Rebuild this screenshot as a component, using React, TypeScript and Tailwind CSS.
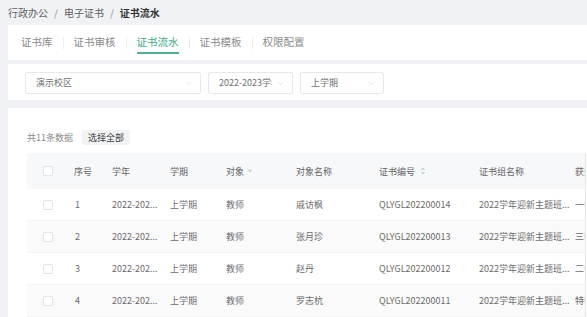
import { ChevronDown } from 'lucide-react';

const TABS = ['证书库', '证书审核', '证书流水', '证书模板', '权限配置'];

const ROWS = [
  { no: '1', name: '戚访枫', code: 'QLYGL202200014', award: '一等奖' },
  { no: '2', name: '张月珍', code: 'QLYGL202200013', award: '三等奖' },
  { no: '3', name: '赵丹', code: 'QLYGL202200012', award: '二等奖' },
  { no: '4', name: '罗志杭', code: 'QLYGL202200011', award: '特等奖' },
];

const COLS = 'grid grid-cols-[37px_39px_58px_55px_70px_83px_100px_96px_120px]';

function Checkbox() {
  return <span className="block h-[10px] w-[10px] rounded-[2px] border border-[#e0e3e8] bg-white" />;
}

function Select({ label, width }: { label: string; width: string }) {
  return (
    <div className={`flex h-[22px] items-center justify-between gap-[4px] overflow-hidden rounded-[2px] border border-[#e6e8ec] bg-white pl-[10px] pr-[7px] ${width}`}>
      <span className="min-w-0 overflow-hidden whitespace-nowrap text-[9px] text-[#707070]">{label}</span>
      <ChevronDown className="h-[9px] w-[9px] shrink-0 text-[#c8cbd0]" strokeWidth={1.5} />
    </div>
  );
}

function SortIcon() {
  return (
    <svg width="6" height="8" viewBox="0 0 6 8" className="ml-[5px]">
      <path d="M3 0.5 L5.5 3 L0.5 3 Z" fill="#cfd2d6" />
      <path d="M3 7.5 L5.5 5 L0.5 5 Z" fill="#cfd2d6" />
    </svg>
  );
}

export default function App() {
  return (
    <div className="h-[317px] w-[587px] overflow-hidden bg-[#f0f2f5] font-['Noto_Sans_CJK_SC',sans-serif] text-[#6b6b6b]">
      <div className="flex h-[25px] items-center gap-[6px] pl-[8px] text-[10px] leading-none text-[#606060]">
        <span>行政办公</span>
        <span className="text-[#909399]">/</span>
        <span>电子证书</span>
        <span className="text-[#909399]">/</span>
        <span className="font-bold text-[#333]">证书流水</span>
      </div>

      <div className="ml-[8px] flex h-[35px] items-center bg-white pl-[13px] text-[10.5px] leading-none text-[#8a8a8a]">
        {TABS.map((t, i) => (
          <div key={t} className="flex items-center">
            {i > 0 && <span className="mx-[10px] h-[12px] w-px bg-[#ececec]" />}
            <span className={`relative ${i === 2 ? 'text-[#3dab8b]' : ''}`}>
              {t}
              {i === 2 && <span className="absolute left-0 right-0 top-[15px] h-[2px] bg-[#4fb096]" />}
            </span>
          </div>
        ))}
      </div>

      <div className="ml-[8px] mt-[4px] flex h-[36px] items-start gap-[7px] bg-white pl-[17px] pt-[8px]">
        <Select label="演示校区" width="w-[176px]" />
        <Select label="2022-2023学年" width="w-[85px]" />
        <Select label="上学期" width="w-[84px]" />
      </div>

      <div className="ml-[8px] mt-[8px] h-[220px] bg-white pl-[19px] pt-[21px]">
        <div className="flex h-[16px] items-center text-[9px] leading-none">
          <span className="text-[#8a8a8a]">共11条数据</span>
          <span className="ml-[9px] flex h-[15px] items-center rounded-[2px] bg-[#f2f3f5] px-[6px] text-[#404040]">选择全部</span>
        </div>

        <div className="mt-[8px] w-[559px] overflow-hidden border-r border-[#e6e6e6] text-[9px] leading-none">
          <div className={`${COLS} h-[36px] items-center bg-[#f7f8fa] text-[#666]`}>
            <div className="pl-[16px]"><Checkbox /></div>
            <div className="pl-[10px]">序号</div>
            <div className="pl-[9px]">学年</div>
            <div className="pl-[9px]">学期</div>
            <div className="flex items-center pl-[10px]">
              对象
              <svg width="6" height="4" viewBox="0 0 6 4" className="ml-[3px]">
                <path d="M0.5 0.5 L5.5 0.5 L3 3.5 Z" fill="#cfd2d6" />
              </svg>
            </div>
            <div className="pl-[10px]">对象名称</div>
            <div className="flex items-center pl-[10px]">证书编号<SortIcon /></div>
            <div className="pl-[10px]">证书组名称</div>
            <div className="whitespace-nowrap pl-[10px]">获奖等级</div>
          </div>
          {ROWS.map((r, i) => (
            <div
              key={r.no}
              className={`${COLS} h-[32px] items-center border-b border-[#f4f4f4] ${i % 2 === 1 ? 'bg-[#fafafa]' : 'bg-white'}`}
            >
              <div className="pl-[16px]"><Checkbox /></div>
              <div className="pl-[11px]">{r.no}</div>
              <div className="whitespace-nowrap pl-[9px]">2022-202...</div>
              <div className="pl-[9px]">上学期</div>
              <div className="pl-[10px]">教师</div>
              <div className="pl-[10px]">{r.name}</div>
              <div className="pl-[10px]">{r.code}</div>
              <div className="whitespace-nowrap pl-[10px]">2022学年迎新主题班...</div>
              <div className="whitespace-nowrap pl-[10px]">{r.award}</div>
            </div>
          ))}
        </div>
      </div>
    </div>
  );
}
